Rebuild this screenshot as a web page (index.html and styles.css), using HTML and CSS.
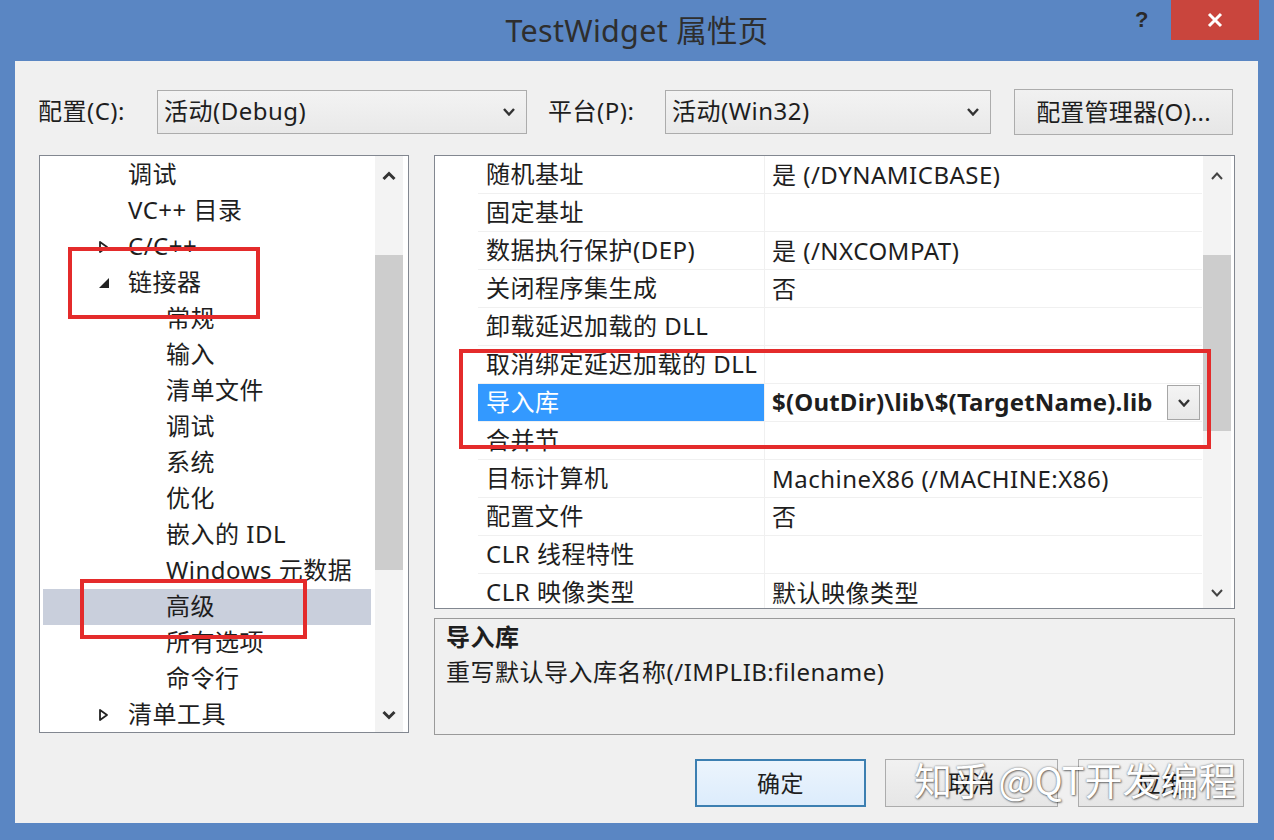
FILE: index.html
```html
<!DOCTYPE html>
<html lang="zh-CN">
<head>
<meta charset="utf-8">
<title>TestWidget 属性页</title>
<link rel="stylesheet" href="styles.css">
</head>
<body>
<div class="window">
  <div class="titlebar">
    <div class="tb-left"></div>
    <div class="title">TestWidget 属性页</div>
    <div class="tb-right">
      <div class="help">?</div>
      <div class="close">
        <svg width="16" height="16" viewBox="0 0 16 16"><path d="M2 2 L14 14 M14 2 L2 14" stroke="#fff" stroke-width="3" fill="none"/></svg>
      </div>
    </div>
  </div>

  <div class="client">
    <div class="toolbar">
      <div class="label lbl-config">配置(C):</div>
      <div class="combo combo-config">
        <span>活动(Debug)</span>
        <svg class="chev" width="12" height="8" viewBox="0 0 12 8"><path d="M1 1 L6 6.5 L11 1" stroke="#333" stroke-width="2.4" fill="none"/></svg>
      </div>
      <div class="label lbl-platform">平台(P):</div>
      <div class="combo combo-platform">
        <span>活动(Win32)</span>
        <svg class="chev" width="12" height="8" viewBox="0 0 12 8"><path d="M1 1 L6 6.5 L11 1" stroke="#333" stroke-width="2.4" fill="none"/></svg>
      </div>
      <div class="btn btn-manager">配置管理器(O)...</div>
    </div>

    <div class="main">
      <div class="tree">
        <div class="tree-items">
          <div class="trow l1"><span class="tw"></span>调试</div>
          <div class="trow l1"><span class="tw"></span>VC++ 目录</div>
          <div class="trow l1"><span class="tw"><svg width="12" height="14" viewBox="0 0 12 14"><path d="M2 2 L9 7 L2 12 Z" stroke="#222" stroke-width="1.8" fill="none" stroke-linejoin="round"/></svg></span>C/C++</div>
          <div class="trow l1"><span class="tw"><svg width="12" height="12" viewBox="0 0 12 12"><path d="M11 1 L11 11 L1 11 Z" fill="#222"/></svg></span>链接器</div>
          <div class="trow l2">常规</div>
          <div class="trow l2">输入</div>
          <div class="trow l2">清单文件</div>
          <div class="trow l2">调试</div>
          <div class="trow l2">系统</div>
          <div class="trow l2">优化</div>
          <div class="trow l2">嵌入的 IDL</div>
          <div class="trow l2">Windows 元数据</div>
          <div class="trow l2 selected">高级</div>
          <div class="trow l2">所有选项</div>
          <div class="trow l2">命令行</div>
          <div class="trow l1"><span class="tw"><svg width="12" height="14" viewBox="0 0 12 14"><path d="M2 2 L9 7 L2 12 Z" stroke="#222" stroke-width="1.8" fill="none" stroke-linejoin="round"/></svg></span>清单工具</div>
        </div>
        <div class="vscroll tree-scroll">
          <svg class="arr" width="14" height="10" viewBox="0 0 14 10"><path d="M1.5 8 L7 2.5 L12.5 8" stroke="#333" stroke-width="3" fill="none"/></svg>
          <div class="track"><div class="thumb thumb-tree"></div></div>
          <svg class="arr" width="14" height="10" viewBox="0 0 14 10"><path d="M1.5 2 L7 7.5 L12.5 2" stroke="#333" stroke-width="3" fill="none"/></svg>
        </div>
      </div>

      <div class="rightcol">
        <div class="grid">
          <div class="gmargin"></div>
          <div class="grows">
            <div class="grow"><div class="gname">随机基址</div><div class="gval">是 (/DYNAMICBASE)</div></div>
            <div class="grow"><div class="gname">固定基址</div><div class="gval"></div></div>
            <div class="grow"><div class="gname">数据执行保护(DEP)</div><div class="gval">是 (/NXCOMPAT)</div></div>
            <div class="grow"><div class="gname">关闭程序集生成</div><div class="gval">否</div></div>
            <div class="grow"><div class="gname">卸载延迟加载的 DLL</div><div class="gval"></div></div>
            <div class="grow"><div class="gname">取消绑定延迟加载的 DLL</div><div class="gval"></div></div>
            <div class="grow active"><div class="gname">导入库</div><div class="gval"><span class="edit">$(OutDir)\lib\$(TargetName).lib</span><span class="ddbtn"><svg width="12" height="8" viewBox="0 0 12 8"><path d="M1 1 L6 6.5 L11 1" stroke="#333" stroke-width="2.4" fill="none"/></svg></span></div></div>
            <div class="grow"><div class="gname">合并节</div><div class="gval"></div></div>
            <div class="grow"><div class="gname">目标计算机</div><div class="gval">MachineX86 (/MACHINE:X86)</div></div>
            <div class="grow"><div class="gname">配置文件</div><div class="gval">否</div></div>
            <div class="grow"><div class="gname">CLR 线程特性</div><div class="gval"></div></div>
            <div class="grow"><div class="gname">CLR 映像类型</div><div class="gval">默认映像类型</div></div>
          </div>
          <div class="vscroll grid-scroll">
            <svg class="arr" width="14" height="10" viewBox="0 0 14 10"><path d="M2 8 L7 2.5 L12 8" stroke="#444" stroke-width="2" fill="none"/></svg>
            <div class="track"><div class="thumb thumb-grid"></div></div>
            <svg class="arr" width="14" height="10" viewBox="0 0 14 10"><path d="M2 2 L7 7.5 L12 2" stroke="#444" stroke-width="2" fill="none"/></svg>
          </div>
        </div>
        <div class="desc">
          <div class="desc-title">导入库</div>
          <div class="desc-text">重写默认导入库名称(/IMPLIB:filename)</div>
        </div>
      </div>
    </div>

    <div class="buttons">
      <div class="btn btn-ok">确定</div>
      <div class="btn btn-cancel">取消</div>
      <div class="btn btn-apply">应用</div>
    </div>
  </div>

  <div class="redbox rb1"></div>
  <div class="redbox rb2"></div>
  <div class="redbox rb3"></div>
  <div class="watermark">知乎 @QT开发编程</div>
</div>
</body>
</html>
```

FILE: styles.css
```css
* { box-sizing: border-box; }

body {
  margin: 0;
  width: 1274px;
  height: 840px;
  overflow: hidden;
  font-family: "Noto Sans", "Noto Sans CJK SC", sans-serif;
  color: #1e1e1e;
  letter-spacing: 0.5px;
}

.window {
  position: relative;
  width: 1274px;
  height: 840px;
  background: #5a86c3;
  display: flex;
  flex-direction: column;
}

.titlebar {
  height: 61px;
  display: grid;
  grid-template-columns: 1fr auto 1fr;
  flex: none;
}

.title {
  font-size: 30.5px;
  line-height: 60px;
  letter-spacing: 0.3px;
  color: #2e2e2e;
  white-space: nowrap;
}

.tb-right {
  display: flex;
  justify-content: flex-end;
  align-items: flex-start;
  padding-right: 15px;
}

.help {
  font-size: 22px;
  font-weight: bold;
  color: #2a2a2a;
  margin-top: 7px;
  margin-right: 22px;
  font-family: "Liberation Sans", sans-serif;
}

.close {
  width: 88px;
  height: 40px;
  background: #c9453d;
  display: flex;
  align-items: center;
  justify-content: center;
}

.client {
  margin: 0 16px 0 15px;
  height: 762px;
  background: #f0f0f0;
  flex: none;
  display: flex;
  flex-direction: column;
}

.toolbar {
  display: flex;
  align-items: center;
  height: 45px;
  margin-top: 28px;
  padding-left: 23px;
  font-size: 24px;
}

.label { white-space: nowrap; padding-bottom: 4px; }
.lbl-config { width: 119px; }
.lbl-platform { width: 117px; margin-left: 21px; }

.combo {
  height: 44px;
  border: 1px solid #acacac;
  background: linear-gradient(#f3f3f3, #e9e9e9);
  display: flex;
  align-items: center;
  justify-content: space-between;
  padding: 0 11px 4px 6px;
}
.combo .chev { margin-top: 4px; }
.combo-config { width: 370px; }
.combo-platform { width: 326px; }

.btn {
  height: 46px;
  border: 1px solid #acacac;
  background: linear-gradient(#f1f1f1, #e6e6e6);
  display: flex;
  align-items: center;
  justify-content: center;
  font-size: 24px;
  padding-bottom: 3px;
  white-space: nowrap;
}
.btn-manager { width: 219px; margin-left: 23px; letter-spacing: 0.2px; }

.main {
  display: flex;
  margin-top: 21px;
  padding-left: 24px;
  gap: 25px;
}

.tree {
  width: 370px;
  height: 578px;
  border: 1px solid #828790;
  background: #fff;
  display: flex;
  overflow: hidden;
}

.tree-items {
  width: 331px;
  flex: none;
  padding: 1px 0 0 3px;
  font-size: 24px;
  overflow: hidden;
}

.trow {
  height: 36px;
  line-height: 34px;
  display: flex;
  align-items: center;
  white-space: nowrap;
  padding-bottom: 2px;
}
.trow.l1 { padding-left: 55px; }
.trow.l2 { padding-left: 123px; }
.trow .tw { width: 30px; display: flex; align-items: center; padding-top: 2px; }
.trow.selected { background: #c9cfdc; }

.vscroll {
  width: 28px;
  flex: none;
  display: flex;
  flex-direction: column;
  align-items: center;
  background: #f3f3f3;
}
.vscroll .arr { flex: none; }
.vscroll .track { flex: 1; width: 100%; position: relative; }

.tree-scroll { margin-left: 4px; padding: 15px 0 12px; }
.tree-scroll .track { margin: 4px 0; }
.thumb { position: absolute; left: 0; right: 0; background: #cdcdcd; }
.thumb-tree { top: 70px; height: 315px; }

.rightcol {
  width: 801px;
  display: flex;
  flex-direction: column;
  gap: 9px;
}

.grid {
  height: 454px;
  border: 1px solid #828790;
  background: #fff;
  display: flex;
  overflow: hidden;
}

.gmargin { width: 43px; flex: none; background: #fff; }

.grows {
  width: 724px;
  flex: none;
  font-size: 24px;
  overflow: hidden;
}

.grow {
  height: 38px;
  display: flex;
  border-bottom: 1px solid #f0f0f0;
}
.gname {
  width: 287px;
  flex: none;
  padding: 0 0 2px 8px;
  line-height: 35px;
  white-space: nowrap;
  overflow: hidden;
  border-right: 1px solid #f0f0f0;
}
.gval {
  flex: 1;
  padding-left: 7px;
  line-height: 35px;
  white-space: nowrap;
  overflow: hidden;
  display: flex;
  align-items: center;
}
.grow.active .gname { background: #3399ff; color: #fff; }
.grow.active .gval { padding-right: 2px; }
.edit {
  font-weight: bold;
  flex: 1;
  overflow: hidden;
  white-space: nowrap;
  padding-bottom: 2px;
  letter-spacing: 0.2px;
}
.ddbtn {
  width: 33px;
  height: 35px;
  border: 1px solid #a6a6a6;
  background: linear-gradient(#f4f4f4, #e8e8e8);
  display: flex;
  align-items: center;
  justify-content: center;
  flex: none;
}

.grid-scroll { margin-left: 1px; padding: 15px 0 10px; }
.grid-scroll .track { margin: 4px 0; }
.thumb-grid { top: 70px; height: 176px; }

.desc {
  height: 117px;
  border: 1px solid #9a9a9a;
  background: #f0f0f0;
  padding: 1px 0 0 11px;
  font-size: 24px;
}
.desc-title { font-weight: bold; line-height: 34px; }
.desc-text { line-height: 36px; }

.buttons {
  display: flex;
  justify-content: flex-end;
  margin-top: 24px;
  padding-right: 14px;
}
.buttons .btn { font-size: 23px; }
.btn-ok { width: 171px; height: 48px; border: 2px solid #3c7fb1; background: linear-gradient(#ecf4fc, #dcecfc); }
.btn-cancel { width: 173px; height: 48px; margin-left: 19px; }
.btn-apply { width: 166px; height: 48px; margin-left: 20px; }

.redbox {
  position: absolute;
  border: 4px solid #e42b2b;
}
.rb1 { left: 68px; top: 247px; width: 192px; height: 72px; }
.rb2 { left: 80px; top: 579px; width: 227px; height: 60px; }
.rb3 { left: 459px; top: 349px; width: 752px; height: 100px; }

.watermark {
  position: absolute;
  left: 914px;
  top: 753px;
  font-size: 38px;
  line-height: 52px;
  letter-spacing: 0;
  color: #fff;
  font-family: "Noto Sans CJK SC", sans-serif;
  white-space: nowrap;
  text-shadow: 0 0 2px rgba(0,0,0,0.55), 1px 1px 2px rgba(0,0,0,0.45);
}
```
